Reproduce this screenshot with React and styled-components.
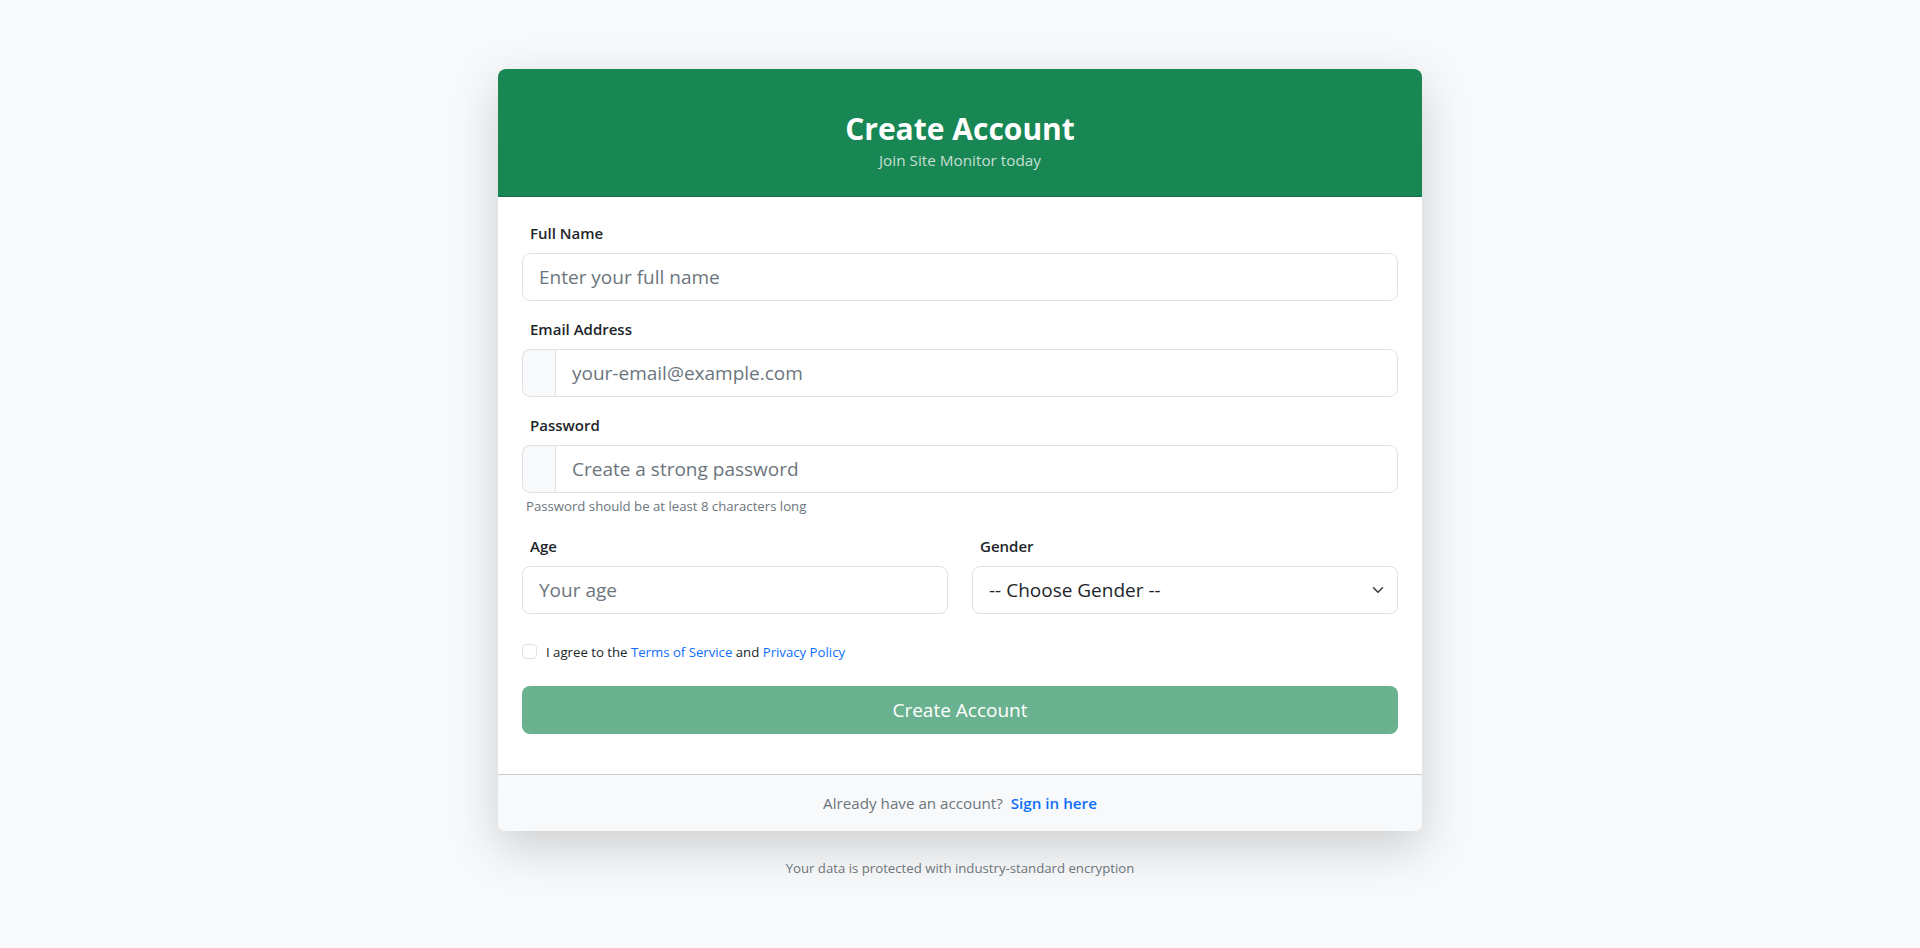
import React from "react";
import styled, { createGlobalStyle } from "styled-components";

const GlobalStyle = createGlobalStyle`
  * { box-sizing: border-box; }
  body {
    margin: 0;
    background: #f8f9fa;
    font-family: "Open Sans", "Noto Sans", Arial, sans-serif;
    color: #212529;
  }
`;

const Page = styled.main`
  display: flex;
  flex-direction: column;
  align-items: center;
  padding: 69px 0 40px;
`;

const Card = styled.section`
  width: 924px;
  background: #ffffff;
  border-radius: 8px;
  box-shadow: 0 16px 48px rgba(0, 0, 0, 0.175);
  overflow: hidden;
`;

const Header = styled.header`
  background: #198754;
  text-align: center;
  padding: 41px 24px 25px;
  border-bottom: 1px solid rgba(0, 0, 0, 0.175);
`;

const Title = styled.h2`
  margin: 0 0 2px;
  font-size: 30px;
  line-height: 38px;
  font-weight: 700;
  color: #ffffff;
`;

const Subtitle = styled.p`
  margin: 0;
  font-size: 15.3px;
  line-height: 21px;
  color: rgba(255, 255, 255, 0.75);
`;

const Body = styled.form`
  padding: 24px;
`;

const Field = styled.div`
  margin-bottom: ${(p) => p.$mb ?? 16}px;
`;

const Label = styled.label`
  display: block;
  padding-left: 8px;
  margin-bottom: 8px;
  font-size: 15px;
  line-height: 24px;
  font-weight: 600;
  color: #212529;
`;

const Control = styled.input`
  display: block;
  width: 100%;
  height: 48px;
  padding: 8px 16px;
  font-family: inherit;
  font-size: 19px;
  color: #212529;
  background: #ffffff;
  border: 1px solid #dee2e6;
  border-radius: ${(p) => (p.$grouped ? "0 8px 8px 0" : "8px")};
  outline: none;
  &::placeholder {
    color: #6c757d;
    opacity: 1;
  }
`;

const Group = styled.div`
  display: flex;
`;

const Addon = styled.span`
  flex: 0 0 33px;
  height: 48px;
  background: #f8f9fa;
  border: 1px solid #dee2e6;
  border-right: none;
  border-radius: 8px 0 0 8px;
`;

const Help = styled.div`
  margin-top: 4px;
  padding-left: 4px;
  font-size: 13.2px;
  line-height: 19px;
  color: #6c757d;
`;

const Row = styled.div`
  display: grid;
  grid-template-columns: 1fr 1fr;
  column-gap: 24px;
  margin-bottom: 27px;
`;

const SelectWrap = styled.div`
  position: relative;
`;

const Select = styled.select`
  display: block;
  width: 100%;
  height: 48px;
  padding: 8px 48px 8px 16px;
  font-family: inherit;
  font-size: 19px;
  color: #212529;
  background: #ffffff;
  border: 1px solid #dee2e6;
  border-radius: 8px;
  appearance: none;
  -webkit-appearance: none;
  outline: none;
`;

const Chevron = styled.svg`
  position: absolute;
  right: 12px;
  top: 50%;
  width: 16px;
  height: 12px;
  margin-top: -6px;
  pointer-events: none;
`;

const CheckRow = styled.div`
  display: flex;
  align-items: center;
  gap: 9px;
  height: 21px;
  margin-bottom: 24px;
  font-size: 13.2px;
  color: #212529;
`;

const Check = styled.input`
  appearance: none;
  -webkit-appearance: none;
  width: 15px;
  height: 15px;
  margin: 0;
  border: 1px solid #dee2e6;
  border-radius: 4px;
  background: #ffffff;
  flex-shrink: 0;
`;

const Link = styled.a`
  color: #0d6efd;
  text-decoration: none;
  font-weight: ${(p) => (p.$strong ? 600 : 400)};
  margin-left: ${(p) => (p.$strong ? 4 : 0)}px;
`;

const Submit = styled.button`
  display: block;
  width: 100%;
  height: 48px;
  margin-bottom: 16px;
  font-family: inherit;
  font-size: 19px;
  color: #ffffff;
  background: #6ab190;
  border: none;
  border-radius: 8px;
`;

const Footer = styled.footer`
  padding: 16px;
  text-align: center;
  background: #f8f9fa;
  border-top: 1px solid rgba(0, 0, 0, 0.175);
  font-size: 15.2px;
  line-height: 24px;
  color: #6c757d;
`;

const Note = styled.p`
  margin: 28px 0 0;
  font-size: 13.2px;
  line-height: 19px;
  color: #6c757d;
`;

export default function App() {
  return (
    <>
      <GlobalStyle />
      <Page>
        <Card>
          <Header>
            <Title>Create Account</Title>
            <Subtitle>Join Site Monitor today</Subtitle>
          </Header>
          <Body onSubmit={(e) => e.preventDefault()}>
            <Field>
              <Label htmlFor="fullname">Full Name</Label>
              <Control id="fullname" placeholder="Enter your full name" />
            </Field>
            <Field>
              <Label htmlFor="email">Email Address</Label>
              <Group>
                <Addon />
                <Control $grouped id="email" type="email" placeholder="your-email@example.com" />
              </Group>
            </Field>
            <Field $mb={18}>
              <Label htmlFor="password">Password</Label>
              <Group>
                <Addon />
                <Control $grouped id="password" type="password" placeholder="Create a strong password" />
              </Group>
              <Help>Password should be at least 8 characters long</Help>
            </Field>
            <Row>
              <div>
                <Label htmlFor="age">Age</Label>
                <Control id="age" type="number" placeholder="Your age" />
              </div>
              <div>
                <Label htmlFor="gender">Gender</Label>
                <SelectWrap>
                  <Select id="gender" defaultValue="">
                    <option value="">-- Choose Gender --</option>
                    <option value="male">Male</option>
                    <option value="female">Female</option>
                    <option value="other">Other</option>
                  </Select>
                  <Chevron viewBox="0 0 16 16">
                    <path
                      d="m2 5 6 6 6-6"
                      fill="none"
                      stroke="#343a40"
                      strokeWidth="2"
                      strokeLinecap="round"
                      strokeLinejoin="round"
                    />
                  </Chevron>
                </SelectWrap>
              </div>
            </Row>
            <CheckRow>
              <Check type="checkbox" id="agree" />
              <label htmlFor="agree">
                I agree to the <Link href="#">Terms of Service</Link> and{" "}
                <Link href="#">Privacy Policy</Link>
              </label>
            </CheckRow>
            <Submit type="submit" disabled>
              Create Account
            </Submit>
          </Body>
          <Footer>
            Already have an account? <Link $strong href="#">Sign in here</Link>
          </Footer>
        </Card>
        <Note>Your data is protected with industry-standard encryption</Note>
      </Page>
    </>
  );
}
